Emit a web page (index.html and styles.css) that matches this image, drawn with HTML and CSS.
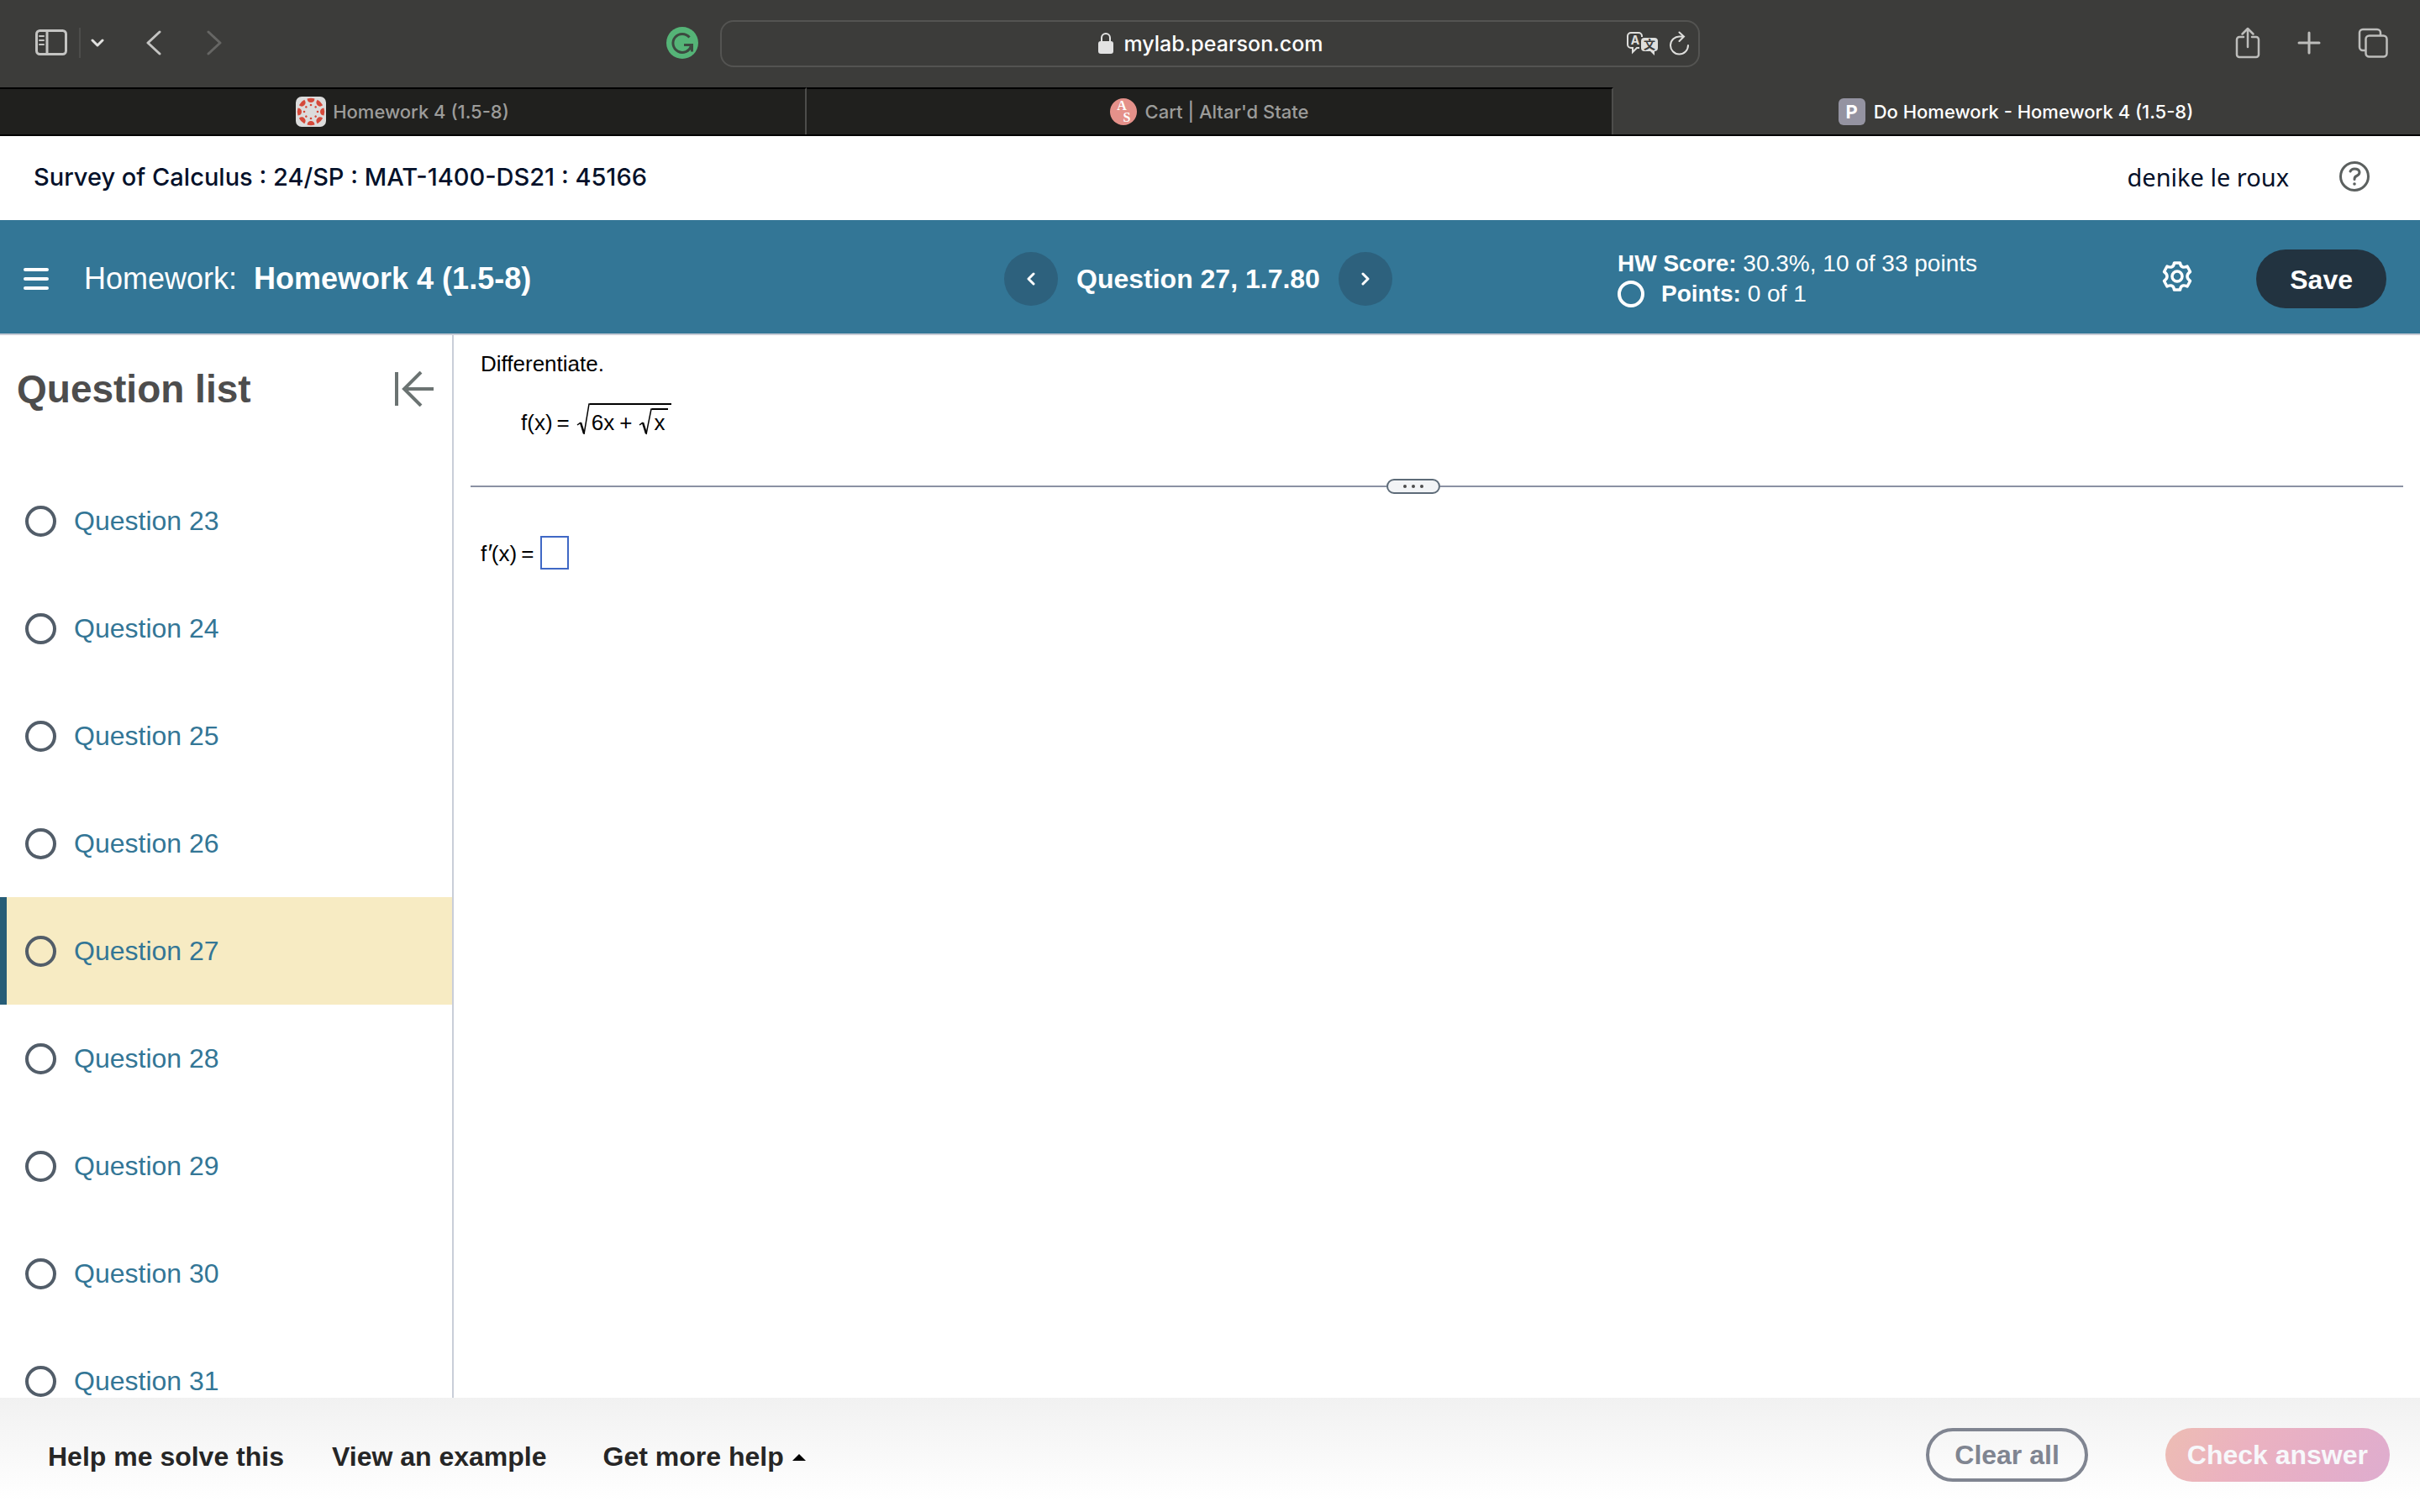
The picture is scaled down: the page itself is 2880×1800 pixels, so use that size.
FILE: index.html
```html
<!DOCTYPE html>
<html lang="en">
<head>
<meta charset="utf-8">
<title>Do Homework - Homework 4 (1.5-8)</title>
<link rel="stylesheet" href="styles.css">
</head>
<body>
<div class="app">
  <div class="toolbar">
    <div class="toolbar-left">
      <button class="icon-btn" aria-label="Show sidebar">
        <svg width="38" height="32" viewBox="0 0 38 32" fill="none" stroke="#c4c4c2" stroke-width="3"><rect x="1.5" y="1.5" width="35" height="28" rx="4"/><path d="M14 2v27"/><path d="M5 8h5M5 13h5M5 18h5" stroke-width="2" stroke-linecap="round"/></svg>
      </button>
      <span class="bar-divider"></span>
      <button class="icon-btn menu-btn" aria-label="Tab groups">
        <svg width="16" height="12" viewBox="0 0 16 12" fill="none" stroke="#e2e2e0" stroke-width="3" stroke-linecap="round" stroke-linejoin="round"><path d="M2 3l6 6 6-6"/></svg>
      </button>
      <button class="icon-btn back-btn" aria-label="Back">
        <svg width="18" height="30" viewBox="0 0 18 30" fill="none" stroke="#c4c4c2" stroke-width="3" stroke-linecap="round" stroke-linejoin="round"><path d="M16 2L2 15l14 13"/></svg>
      </button>
      <button class="icon-btn" aria-label="Forward">
        <svg width="18" height="30" viewBox="0 0 18 30" fill="none" stroke="#666664" stroke-width="3" stroke-linecap="round" stroke-linejoin="round"><path d="M2 2l14 13L2 28"/></svg>
      </button>
      <button class="icon-btn grammar-btn" aria-label="Grammarly">
        <svg width="38" height="38" viewBox="0 0 38 38"><circle cx="19" cy="19" r="19" fill="#55b477"/><path d="M27.500 12.500A11 11 0 1 0 29.500 22.500M21 21.500h9.500v8" fill="none" stroke="#3c4a40" stroke-width="3"/></svg>
      </button>
    </div>
    <div class="address">
      <label class="address-main" for="url">
        <svg width="20" height="28" viewBox="0 0 20 28"><path d="M5 13V7a5 5 0 0 1 10 0v6" fill="none" stroke="#e2e2e2" stroke-width="2"/><rect x="1" y="11" width="18" height="15" rx="3" fill="#e2e2e2"/></svg>
        <input id="url" class="url" type="text" value="mylab.pearson.com" aria-label="Address">
      </label>
      <div class="address-tools">
        <button class="icon-btn" aria-label="Translate">
          <svg width="40" height="30" viewBox="0 0 40 30"><path d="M19 7V6a4 4 0 0 0-4-4H6a4 4 0 0 0-4 4v10a4 4 0 0 0 4 4h2v5l5-5h3" fill="none" stroke="#dededc" stroke-width="2"/><text x="11" y="16" class="glyph-a">A</text><path d="M22 8h12a4 4 0 0 1 4 4v8a4 4 0 0 1-4 4v5l-5-5h-7a4 4 0 0 1-4-4v-8a4 4 0 0 1 4-4z" fill="#dededc"/><text x="28" y="21" class="glyph-wen">文</text></svg>
        </button>
        <button class="icon-btn" aria-label="Reload">
          <svg width="24" height="30" viewBox="0 0 24 30" fill="none" stroke="#dededc" stroke-width="2" stroke-linecap="round"><path d="M22 17a10.500 10.500 0 1 1-10-10.500h4M11.500 1.500l5.500 5-5.500 5.500"/></svg>
        </button>
      </div>
    </div>
    <div class="toolbar-right">
      <button class="icon-btn" aria-label="Share">
        <svg width="30" height="38" viewBox="0 0 30 38" fill="none" stroke="#bdbdbb" stroke-width="2.500" stroke-linecap="round" stroke-linejoin="round"><path d="M10 12H5a3 3 0 0 0-3 3v18a3 3 0 0 0 3 3h20a3 3 0 0 0 3-3V15a3 3 0 0 0-3-3h-5M15 24V2M8.500 8.500L15 2l6.500 6.500"/></svg>
      </button>
      <button class="icon-btn" aria-label="New tab">
        <svg width="28" height="28" viewBox="0 0 28 28" fill="none" stroke="#bdbdbb" stroke-width="3" stroke-linecap="round"><path d="M14 2v24M2 14h24"/></svg>
      </button>
      <button class="icon-btn" aria-label="Tab overview">
        <svg width="36" height="36" viewBox="0 0 36 36" fill="none" stroke="#bdbdbb" stroke-width="2.500"><rect x="9.500" y="9.500" width="25" height="25" rx="4"/><path d="M9 27H6a4 4 0 0 1-4-4V6a4 4 0 0 1 4-4h17a4 4 0 0 1 4 4v3"/></svg>
      </button>
    </div>
  </div>

  <nav class="tabs" aria-label="Tabs">
    <a class="tab" href="#">
      <svg width="36" height="36" viewBox="0 0 36 36"><rect width="36" height="36" rx="7" fill="#dcdcdc"/><g fill="#d5493a"><g id="petals"><path d="M13.500 2.500q4.500-1.500 9 0-.5 4.500-4.500 4.500t-4.500-4.500z"/><circle cx="18" cy="10" r="1.300"/></g><use href="#petals" transform="rotate(45 18 18)"/><use href="#petals" transform="rotate(90 18 18)"/><use href="#petals" transform="rotate(135 18 18)"/><use href="#petals" transform="rotate(180 18 18)"/><use href="#petals" transform="rotate(225 18 18)"/><use href="#petals" transform="rotate(270 18 18)"/><use href="#petals" transform="rotate(315 18 18)"/></g></svg>
      <span>Homework 4 (1.5-8)</span>
    </a>
    <a class="tab tab-wide" href="#">
      <svg width="32" height="32" viewBox="0 0 32 32"><circle cx="16" cy="16" r="16" fill="#e5918a"/><text x="14" y="14" class="glyph-as">A</text><text x="20" y="28" class="glyph-as">S</text></svg>
      <span>Cart | Altar'd State</span>
    </a>
    <a class="tab tab-wide tab-active" href="#" aria-current="page">
      <span class="favicon-p">P</span>
      <span>Do Homework - Homework 4 (1.5-8)</span>
    </a>
  </nav>

  <header class="course">
    <h1 class="course-name">Survey of Calculus : 24/SP : MAT-1400-DS21 : 45166</h1>
    <span class="user">denike le roux</span>
    <button class="icon-btn" aria-label="Help">
      <svg width="36" height="36" viewBox="0 0 36 36" fill="none" stroke="#5b605f" stroke-width="3"><circle cx="18" cy="18" r="16.500"/><path d="M13 12q1.500-3 5-3 5.500 0 6 4 0 3-3.500 4.500-2.500 1-2.500 4" stroke-linecap="round"/><circle cx="18" cy="27" r="1.800" fill="#5b605f" stroke="none"/></svg>
    </button>
  </header>

  <div class="assignment">
    <div class="assignment-title">
      <button class="icon-btn" aria-label="Menu">
        <svg width="30" height="28" viewBox="0 0 30 28" stroke="#fff" stroke-width="4" stroke-linecap="round"><path d="M2 3h26M2 14h26M2 25h26"/></svg>
      </button>
      <h2 class="assignment-name">Homework: <strong>Homework 4 (1.5-8)</strong></h2>
    </div>
    <div class="question-nav">
      <button class="round-btn" aria-label="Previous question">
        <svg width="10" height="16" viewBox="0 0 10 16" fill="none" stroke="#fff" stroke-width="3" stroke-linecap="round" stroke-linejoin="round"><path d="M8 2L2 8l6 6"/></svg>
      </button>
      <strong>Question 27, 1.7.80</strong>
      <button class="round-btn" aria-label="Next question">
        <svg width="10" height="16" viewBox="0 0 10 16" fill="none" stroke="#fff" stroke-width="3" stroke-linecap="round" stroke-linejoin="round"><path d="M2 2l6 6-6 6"/></svg>
      </button>
    </div>
    <div class="status">
      <div class="scores">
        <p><strong>HW Score:</strong> 30.3%, 10 of 33 points</p>
        <p class="points"><span class="ring ring-small"></span><span><strong>Points:</strong> 0 of 1</span></p>
      </div>
      <button class="icon-btn gear-btn" aria-label="Settings">
        <svg width="36" height="36" viewBox="0 0 36 36" fill="none" stroke="#fff" stroke-width="3.500" stroke-linejoin="round"><path d="M14.500 2h7q.5 4.500 3.500 5 1.500.500 5-1l3.500 6.500q-3.500 2.500-3.500 5.500t3.500 5.500L30 30q-3.500-1.500-5-1-3 .500-3.500 5h-7q-.5-4.500-3.500-5-1.500-.5-5 1l-3.500-6.500Q6 21 6 18t-3.500-5.500L6 6q3.500 1.500 5 1 3-.5 3.500-5z"/><circle cx="18" cy="18" r="6"/></svg>
      </button>
      <button class="pill save">Save</button>
    </div>
  </div>

  <div class="workspace">
    <aside class="sidebar">
      <div class="sidebar-head">
        <h2 class="sidebar-title">Question list</h2>
        <button class="icon-btn" aria-label="Collapse question list">
          <svg width="46" height="42" viewBox="0 0 46 42" fill="none" stroke="#6b7372" stroke-width="4"><path d="M2 1v40M46 21H11M31 1L11 21l20 20"/></svg>
        </button>
      </div>
      <ul class="questions">
        <li><a class="question" href="#"><span class="ring"></span>Question 23</a></li>
        <li><a class="question" href="#"><span class="ring"></span>Question 24</a></li>
        <li><a class="question" href="#"><span class="ring"></span>Question 25</a></li>
        <li><a class="question" href="#"><span class="ring"></span>Question 26</a></li>
        <li><a class="question question-current" href="#" aria-current="true"><span class="ring"></span>Question 27</a></li>
        <li><a class="question" href="#"><span class="ring"></span>Question 28</a></li>
        <li><a class="question" href="#"><span class="ring"></span>Question 29</a></li>
        <li><a class="question" href="#"><span class="ring"></span>Question 30</a></li>
        <li><a class="question" href="#"><span class="ring"></span>Question 31</a></li>
      </ul>
    </aside>
    <main class="problem">
      <p class="prompt">Differentiate.</p>
      <div class="formula">
        <span>f(x)<span class="eq">=</span></span>
        <span class="root">
          <svg class="radical" width="16" height="38" viewBox="0 0 16 38" fill="none" stroke="#000"><path d="M1 26l4-3" stroke-width="1.500"/><path d="M5 23l4 13" stroke-width="2.500"/><path d="M9 37L15 1h1" stroke-width="1.500"/></svg>
          <span class="radicand radicand-outer">6x<span class="plus">+</span>
            <span class="root">
              <svg class="radical" width="16" height="32" viewBox="0 0 16 32" fill="none" stroke="#000"><path d="M1 20l4-3" stroke-width="1.500"/><path d="M5 17l4 13" stroke-width="2.500"/><path d="M9 31L15 1h1" stroke-width="1.500"/></svg>
              <span class="radicand">x</span>
            </span>
          </span>
        </span>
      </div>
      <div class="splitter">
        <button class="handle" aria-label="Resize panels"><i></i><i></i><i></i></button>
      </div>
      <div class="answer">
        <label for="answer">f<span class="prime">′</span>(x)<span class="eq">=</span></label>
        <input id="answer" class="answer-box" type="text">
      </div>
    </main>
  </div>

  <footer class="actions">
    <button class="text-btn">Help me solve this</button>
    <button class="text-btn">View an example</button>
    <button class="text-btn more-help">Get more help <svg width="16" height="8" viewBox="0 0 16 8"><path d="M0 8L8 0l8 8z"/></svg></button>
    <button class="pill clear">Clear all</button>
    <button class="pill check">Check answer</button>
  </footer>
</div>
</body>
</html>
```

FILE: styles.css
```css
* { box-sizing: border-box; }
body { margin: 0; font-family: "Liberation Sans", Arial, sans-serif; font-size: 32px; color: #000; background: #fff; }
h1, h2, p, ul { margin: 0; padding: 0; font-weight: 400; }
button, input { font: inherit; color: inherit; padding: 0; border: 0; background: none; }
a { text-decoration: none; }
svg { display: block; flex: none; }

.app { display: flex; flex-direction: column; height: 100vh; }
.icon-btn { display: flex; flex: none; }

/* Browser toolbar */
.toolbar { flex: none; display: grid; grid-template-columns: 1fr 1166px 1fr; align-items: center; height: 104px; background: #3c3c3a; font-family: Inter, sans-serif; }
.toolbar-left { display: flex; align-items: center; padding: 0 26px 2px 42px; }
.bar-divider { width: 2px; height: 36px; margin: 0 12px 0 14px; background: #4d4d4b; }
.back-btn { margin: 0 54px 0 50px; }
.grammar-btn { margin-left: auto; }
.address { display: grid; grid-template-columns: 1fr auto 1fr; align-items: center; height: 56px; border: 2px solid #545452; border-radius: 16px; color: #fff; }
.address-main { grid-column: 2; display: flex; align-items: center; gap: 12px; }
.url { field-sizing: content; font-size: 25px; font-weight: 500; outline: none; }
.address-tools { display: flex; justify-content: flex-end; gap: 12px; padding-right: 10px; }
.toolbar-right { display: flex; align-items: center; justify-content: flex-end; gap: 44px; padding: 0 38px 2px 0; }
.glyph-a { font: 700 14px Inter, sans-serif; fill: #dededc; text-anchor: middle; }
.glyph-wen { font: 700 14px "Noto Sans CJK SC", sans-serif; fill: #3c3c3a; text-anchor: middle; }
.glyph-as { font: 700 16px "Liberation Serif", serif; fill: #fff; text-anchor: middle; }

/* Tab strip */
.tabs { flex: none; display: grid; grid-template-columns: repeat(3, 1fr); height: 58px; border-bottom: 2px solid #000; background: #3c3c3a; }
.tab { display: flex; align-items: center; justify-content: center; gap: 8px; border-top: 2px solid #000; border-right: 2px solid #4d4d4b; background: #20201e; color: #9c9c9a; font: 500 22px Inter, sans-serif; }
.tab-wide { gap: 10px; }
.tab-active { border-color: #3c3c3a; background: #3c3c3a; color: #fff; }
.favicon-p { display: flex; align-items: center; justify-content: center; width: 32px; height: 32px; border-radius: 6px; background: #9493a1; font-weight: 700; }

/* Course header */
.course { flex: none; display: flex; align-items: center; height: 100px; padding: 0 60px 4px 40px; color: #05112a; }
.course-name { margin-right: auto; font: 500 29px Inter, sans-serif; }
.user { margin-right: 60px; font: 400 29px "Noto Sans", sans-serif; }

/* Assignment bar */
.assignment { flex: none; display: grid; grid-template-columns: 1195fr 730fr 955fr; align-items: center; height: 137px; padding-top: 5px; border-bottom: 2px solid #c8ccd6; background: #337696; color: #fff; }
.assignment-title { display: flex; align-items: center; gap: 42px; padding-left: 28px; }
.assignment-name { display: flex; gap: 20px; font-size: 36px; }
.question-nav { display: flex; align-items: center; gap: 22px; }
.round-btn { display: flex; align-items: center; justify-content: center; width: 64px; height: 64px; border-radius: 50%; background: #2d617d; }
.status { display: flex; align-items: center; padding-right: 40px; }
.scores { margin-right: auto; font-size: 28px; line-height: 36px; }
.points { display: flex; align-items: center; gap: 20px; }
.gear-btn { margin: 0 76px 6px 0; }
.pill { height: 64px; border-radius: 35px; padding: 0 26px; font-weight: 700; }
.save { height: 70px; padding: 2px 40px 0; background: #223340; }

.ring { flex: none; width: 37px; height: 37px; border: 4px solid #525d69; border-radius: 50%; }
.ring-small { width: 32px; height: 32px; border-color: #fff; }

/* Question list */
.workspace { flex: 1; display: flex; min-height: 0; }
.sidebar { flex: none; width: 540px; border-right: 2px solid #c9ced9; overflow: hidden; }
.sidebar-head { display: flex; align-items: center; justify-content: space-between; height: 128px; margin-bottom: 29px; padding: 0 22px 0 20px; }
.sidebar-title { font-size: 46px; font-weight: 700; color: #4d4d4d; }
.questions { list-style: none; }
.question { display: flex; align-items: center; gap: 21px; height: 128px; padding-left: 22px; border-left: 8px solid transparent; color: #337696; }
.question-current { border-color: #275d77; background: #f7ebc3; }

/* Problem */
.problem { flex: 1; padding: 19px 20px 0; font-size: 26px; line-height: 30px; }
.prompt { padding-left: 12px; }
.formula { display: flex; align-items: flex-end; gap: 8px; margin-top: 32px; padding-left: 60px; }
.eq { margin-left: 5px; }
.root { display: flex; align-items: flex-end; }
.radicand { display: flex; align-items: flex-end; align-self: stretch; padding: 0 4px 0 2px; border-top: 2px solid #000; }
.plus { margin: 0 8px 0 6px; }
.splitter { display: flex; align-items: center; margin-top: 52px; }
.splitter::before, .splitter::after { content: ""; flex: 1090; height: 2px; background: #8b91a3; }
.splitter::after { flex-grow: 1146; }
.handle { display: flex; align-items: center; justify-content: center; gap: 6px; width: 64px; height: 18px; border: 2px solid #5d6b78; border-radius: 9px; background: #f2f4f6; }
.handle i { width: 4px; height: 4px; border-radius: 50%; background: #4d4d4d; }
.answer { display: flex; align-items: center; gap: 8px; margin-top: 50px; padding-left: 12px; }
.prime { font-size: 30px; font-style: italic; }
.answer-box { width: 34px; height: 40px; border: 2px solid #3f68c5; }

/* Footer */
.actions { flex: none; display: flex; align-items: center; height: 136px; padding: 0 36px 0 57px; background: linear-gradient(#f1f1f1, #fff 90%); }
.text-btn { display: flex; align-items: center; gap: 10px; margin-right: 57px; padding-top: 5px; font-weight: 700; color: #262626; }
.more-help { margin-left: 10px; }
.clear { margin-left: auto; margin-right: 92px; padding: 0 30px; border: 4px solid #808591; color: #808591; }
.check { background: linear-gradient(120deg, #edbdb3, #ebb2c0 35%, #e5aec8 70%, #deadcf); color: #f7f8fb; }
```
